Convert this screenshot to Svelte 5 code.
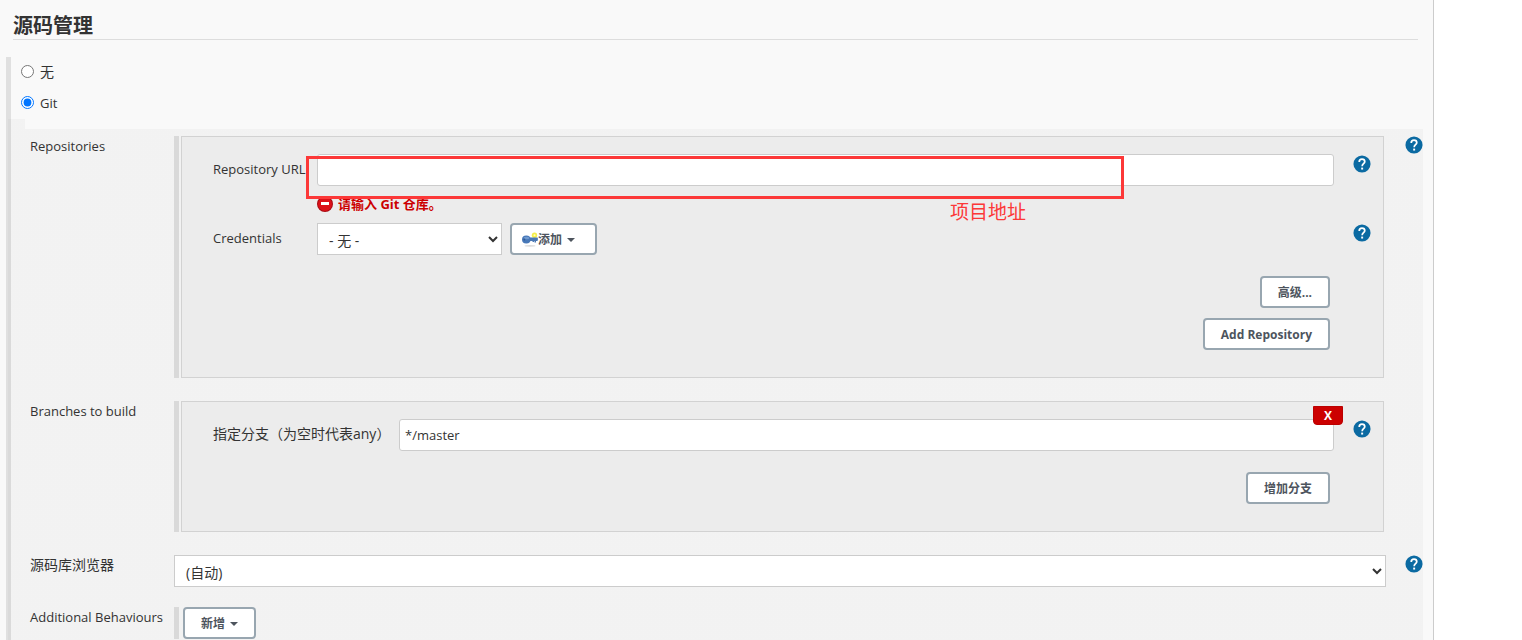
<script lang="ts">
	let scm = $state('git');
	let repositoryUrl = $state('');
	let credentials = $state('none');
	let branch = $state('*/master');
	let browser = $state('auto');
</script>

{#snippet help(topic: string)}
	<button type="button" class="help" aria-label={topic}>
		<svg viewBox="0 0 24 24" aria-hidden="true">
			<circle cx="12" cy="12" r="11.4" fill="#0b6aa2" />
			<path
				d="M8.3 9.2c0-2.3 1.5-3.8 3.7-3.8s3.7 1.5 3.7 3.5c0 2.6-3.5 2.9-3.5 6"
				fill="none"
				stroke="#fff"
				stroke-width="2.3"
			/>
			<rect x="10.9" y="16.8" width="2.6" height="2.6" fill="#fff" />
		</svg>
	</button>
{/snippet}

<main class="panel">
	<h2>源码管理</h2>

	<div class="scm">
		<label class="choice">
			<input type="radio" name="scm" value="none" bind:group={scm} />
			<span>无</span>
		</label>
		<label class="choice">
			<input type="radio" name="scm" value="git" bind:group={scm} />
			<span class="latin">Git</span>
		</label>

		<div class="git">
			<div class="row">
				<span class="name latin">Repositories</span>
				<div class="group">
					<div class="box">
						<div class="field">
							<label class="latin" for="url">Repository URL</label>
							<div class="control">
								<input id="url" type="text" bind:value={repositoryUrl} />
								<div class="highlight"></div>
								<span class="note">项目地址</span>
							</div>
							{@render help('Repository URL')}
						</div>
						<p class="error">
							<svg viewBox="0 0 16 16" aria-hidden="true">
								<circle cx="8" cy="8" r="8" fill="#a80b12" />
								<circle cx="8" cy="8" r="7" fill="#dc1018" />
								<rect x="4" y="6" width="8" height="3" fill="#fff" />
							</svg>
							请输入 Git 仓库。
						</p>
						<div class="field">
							<label class="latin" for="credentials">Credentials</label>
							<div class="control credentials">
								<select id="credentials" bind:value={credentials}>
									<option value="none">- 无 -</option>
								</select>
								<button type="button" class="btn btn--key">
									<svg class="key" viewBox="0 0 16 16" aria-hidden="true">
										<ellipse cx="8" cy="13.8" rx="5.5" ry="0.9" fill="#dcdcdc" />
										<circle cx="12.5" cy="3.2" r="2.7" fill="#f5ee4a" />
										<circle cx="12.5" cy="3.2" r="1" fill="#fffcc0" />
										<path d="M7 5.5h8.5l.5 1.5-.5 2H14v1.5h-1.5V9H12v1h-1.5V9H7z" fill="#4a78b4" />
										<ellipse cx="4.3" cy="7.5" rx="4.3" ry="3.9" fill="#4878b8" />
										<ellipse cx="4.5" cy="6" rx="2.8" ry="1.3" fill="#6f9ad0" />
										<circle cx="2.4" cy="7.5" r="0.9" fill="#2b5795" />
									</svg>
									添加
									<span class="caret"></span>
								</button>
							</div>
							{@render help('Credentials')}
						</div>
						<div class="actions">
							<button type="button" class="btn">高级...</button>
							<button type="button" class="btn">Add Repository</button>
						</div>
					</div>
				</div>
				{@render help('Repositories')}
			</div>

			<div class="row">
				<span class="name latin">Branches to build</span>
				<div class="group">
					<div class="box">
						<div class="field field--wide">
							<label for="branch">指定分支（为空时代表any）</label>
							<div class="control">
								<input id="branch" type="text" bind:value={branch} />
								<button type="button" class="remove">X</button>
							</div>
							{@render help('Branch')}
						</div>
						<div class="actions">
							<button type="button" class="btn">增加分支</button>
						</div>
					</div>
				</div>
			</div>

			<div class="row">
				<label class="name" for="browser">源码库浏览器</label>
				<select id="browser" bind:value={browser}>
					<option value="auto">(自动)</option>
				</select>
				{@render help('源码库浏览器')}
			</div>

			<div class="row">
				<span class="name latin">Additional Behaviours</span>
				<div class="group group--plain">
					<button type="button" class="btn">新增 <span class="caret"></span></button>
				</div>
			</div>
		</div>
	</div>
</main>

<style>
	:global(body) {
		background: #fff;
	}

	.panel {
		display: flex;
		flex-direction: column;
		box-sizing: border-box;
		min-height: 100vh;
		margin-right: 88px;
		padding: 12px 10px 0 6px;
		border-right: 1px solid #ccc;
		background: #f9f9f9;
		color: #333;
		font: 14px/20px 'Open Sans', 'Noto Sans CJK SC', sans-serif;
	}

	h2 {
		margin: 0 5px 17px 7px;
		border-bottom: 1px solid #ddd;
		font-size: 20px;
		line-height: 27px;
	}

	.latin {
		font-size: 13px;
	}

	.scm {
		display: flex;
		flex: 1;
		flex-direction: column;
		border-left: 5px solid #e0e0e0;
	}

	.choice {
		display: flex;
		align-items: center;
		gap: 6px;
		box-sizing: border-box;
		height: 31px;
		padding: 0 0 2px 10px;
	}

	.choice input {
		width: 13px;
		height: 13px;
		margin: 0;
	}

	.git {
		display: flex;
		flex: 1;
		flex-direction: column;
		gap: 20px;
		margin-left: -3px;
		padding: 17px 0 0 22px;
		background:
			linear-gradient(rgba(0, 0, 0, 0.027) 0 0) 0 0 / 17px 10px no-repeat,
			linear-gradient(rgba(0, 0, 0, 0.027) 0 0) 0 10px / 100% 100% no-repeat;
	}

	.row {
		display: grid;
		grid-template-columns: 144px minmax(0, 1fr) 37px;
		align-items: start;
	}

	.name {
		white-space: nowrap;
	}

	.group {
		margin: 0 2px 3px 0;
		padding-left: 2px;
		border-left: 5px solid #d9d9d9;
	}

	.group--plain {
		margin-bottom: 0;
		padding-left: 4px;
	}

	.box {
		padding: 17px 12px 27px 31px;
		border: 1px solid #d2d2d2;
		background: #ececec;
	}

	.field {
		display: grid;
		grid-template-columns: 104px minmax(0, 1fr) 37px;
	}

	.field--wide {
		grid-template-columns: 186px minmax(0, 1fr) 37px;
	}

	.field label {
		padding-top: 5px;
		white-space: nowrap;
	}

	.control {
		position: relative;
	}

	.control input,
	select {
		box-sizing: border-box;
		width: 100%;
		height: 32px;
		border: 1px solid #ccc;
		background-color: #fff;
		color: #333;
		font: inherit;
	}

	.control input {
		display: block;
		padding: 0 5px;
		border-radius: 3px;
		font-size: 13px;
	}

	select {
		padding: 2px 0 0 7px;
	}

	.credentials {
		display: flex;
		gap: 8px;
	}

	.credentials select {
		width: 185px;
	}

	.highlight {
		position: absolute;
		top: 2px;
		right: 210px;
		left: -11px;
		height: 37px;
		border: 3px solid #fc3838;
		pointer-events: none;
	}

	.note {
		position: absolute;
		top: 44px;
		right: 308px;
		color: #fc3838;
		font-size: 19px;
		line-height: 28px;
	}

	.error {
		display: flex;
		align-items: center;
		gap: 5px;
		margin: 7px 0 8px 104px;
		color: #c00;
		font-size: 13px;
		font-weight: 700;
		line-height: 22px;
	}

	.error svg {
		width: 16px;
		height: 16px;
	}

	.actions {
		display: flex;
		flex-direction: column;
		align-items: flex-end;
		gap: 10px;
		margin: 21px 41px 0 0;
	}

	.btn {
		display: inline-flex;
		align-items: center;
		box-sizing: border-box;
		height: 32px;
		padding: 2px 16px 0;
		border: 2px solid #98a6b0;
		border-radius: 4px;
		background: #fff;
		color: #4d545d;
		font: inherit;
		font-size: 12px;
		font-weight: 700;
	}

	.btn--key {
		padding: 2px 20px 0 10px;
	}

	.key {
		width: 16px;
		height: 16px;
	}

	.caret {
		margin-left: 5px;
		border: 4px solid transparent;
		border-top-color: currentColor;
		border-bottom: 0;
	}

	.remove {
		position: absolute;
		top: -13px;
		right: -9px;
		width: 30px;
		height: 19px;
		padding: 0;
		border: 1px solid #b00;
		border-radius: 0 0 4px 4px;
		background: #c00;
		color: #fff;
		font: inherit;
		font-size: 12px;
		font-weight: 700;
		line-height: 16px;
	}

	.help {
		justify-self: end;
		width: 18px;
		height: 18px;
		padding: 0;
		border: 0;
		background: none;
	}

	.field .help {
		margin-top: 1px;
	}

	.help svg {
		display: block;
	}
</style>
